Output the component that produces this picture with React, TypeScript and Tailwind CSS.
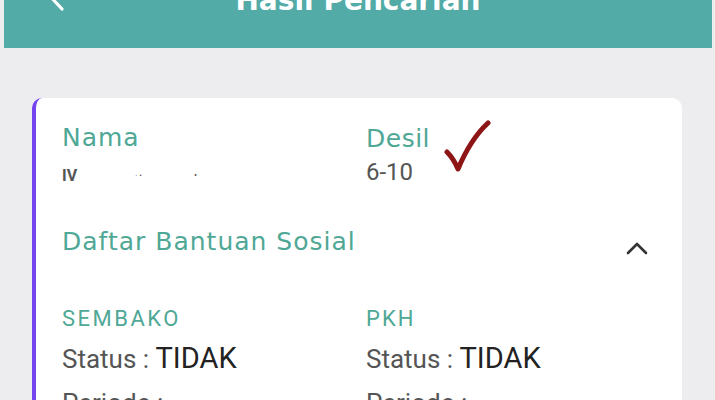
export default function App() {
  return (
    <div className="w-[715px] h-[400px] overflow-hidden bg-[#ededef] pl-[4px] pr-[3px] font-['DejaVu_Sans',sans-serif]">
      {/* Header */}
      <div className="h-[48px] bg-[#52aba6] relative flex justify-center overflow-hidden">
        <svg className="absolute left-[40px] -top-[8px] w-[24px] h-[22px]" viewBox="0 0 24 22" fill="none">
          <path d="M4 2 L18 17" stroke="#fff" strokeWidth="3.2" strokeLinecap="round" />
        </svg>
        <h1 className="-mt-[20px] text-[28px] font-bold text-white">Hasil Pencarian</h1>
      </div>

      {/* Card */}
      <div className="ml-[28px] mt-[50px] w-[650px] bg-white rounded-[10px] border-l-[4px] border-[#7444f0] pl-[26px] pr-[28px] pt-[25px] h-[320px]">
        <div className="grid grid-cols-[304px_1fr]">
          <div>
            <div className="text-[25px] text-[#4fa895] leading-[30px] tracking-[1px]">Nama</div>
            <div className="mt-[13px] flex items-center text-[16px] text-[#555] font-['Roboto',sans-serif] h-[20px]">
              <span className="font-bold">IV</span>
              <span className="ml-[58px] text-[8px]">· •</span>
              <span className="ml-[52px] text-[9px]">•</span>
            </div>
          </div>
          <div className="relative">
            <div className="text-[25px] text-[#4fa895] leading-[30px] mt-[1px] tracking-[0.5px]">Desil</div>
            <div className="text-[24px] text-[#555] leading-[30px] mt-[3px] font-['Roboto',sans-serif]">6-10</div>
            <svg className="absolute left-[76px] -top-[3px] w-[52px] h-[56px]" viewBox="0 0 52 56" fill="none">
              <path d="M5 32 C 9 36, 13 42, 16 49 C 24 30, 34 14, 46 3" stroke="#8d1515" strokeWidth="5" strokeLinecap="round" strokeLinejoin="round" />
            </svg>
          </div>
        </div>

        <div className="mt-[40px] flex items-center justify-between">
          <div className="text-[25px] text-[#4fa895] leading-[30px] tracking-[1px]">Daftar Bantuan Sosial</div>
          <svg className="w-[24px] h-[14px] mr-[5px] mt-[12px]" viewBox="0 0 24 14" fill="none">
            <path d="M3 12 L12 3 L21 12" stroke="#333" strokeWidth="2.6" strokeLinecap="round" strokeLinejoin="round" />
          </svg>
        </div>

        <div className="mt-[48px] grid grid-cols-[304px_1fr] font-['Roboto',sans-serif]">
          <div>
            <div className="text-[22px] text-[#4fa895] leading-[28px] tracking-[2.5px]">SEMBAKO</div>
            <div className="mt-[8px] leading-[34px]">
              <span className="text-[26px] text-[#555]">Status : </span>
              <span className="text-[29px] text-[#222]">TIDAK</span>
            </div>
            <div className="mt-[4px] text-[26px] text-[#555]">Periode :</div>
          </div>
          <div>
            <div className="text-[22px] text-[#4fa895] leading-[28px] tracking-[2px]">PKH</div>
            <div className="mt-[8px] leading-[34px]">
              <span className="text-[26px] text-[#555]">Status : </span>
              <span className="text-[29px] text-[#222]">TIDAK</span>
            </div>
            <div className="mt-[4px] text-[26px] text-[#555]">Periode :</div>
          </div>
        </div>
      </div>
    </div>
  );
}
